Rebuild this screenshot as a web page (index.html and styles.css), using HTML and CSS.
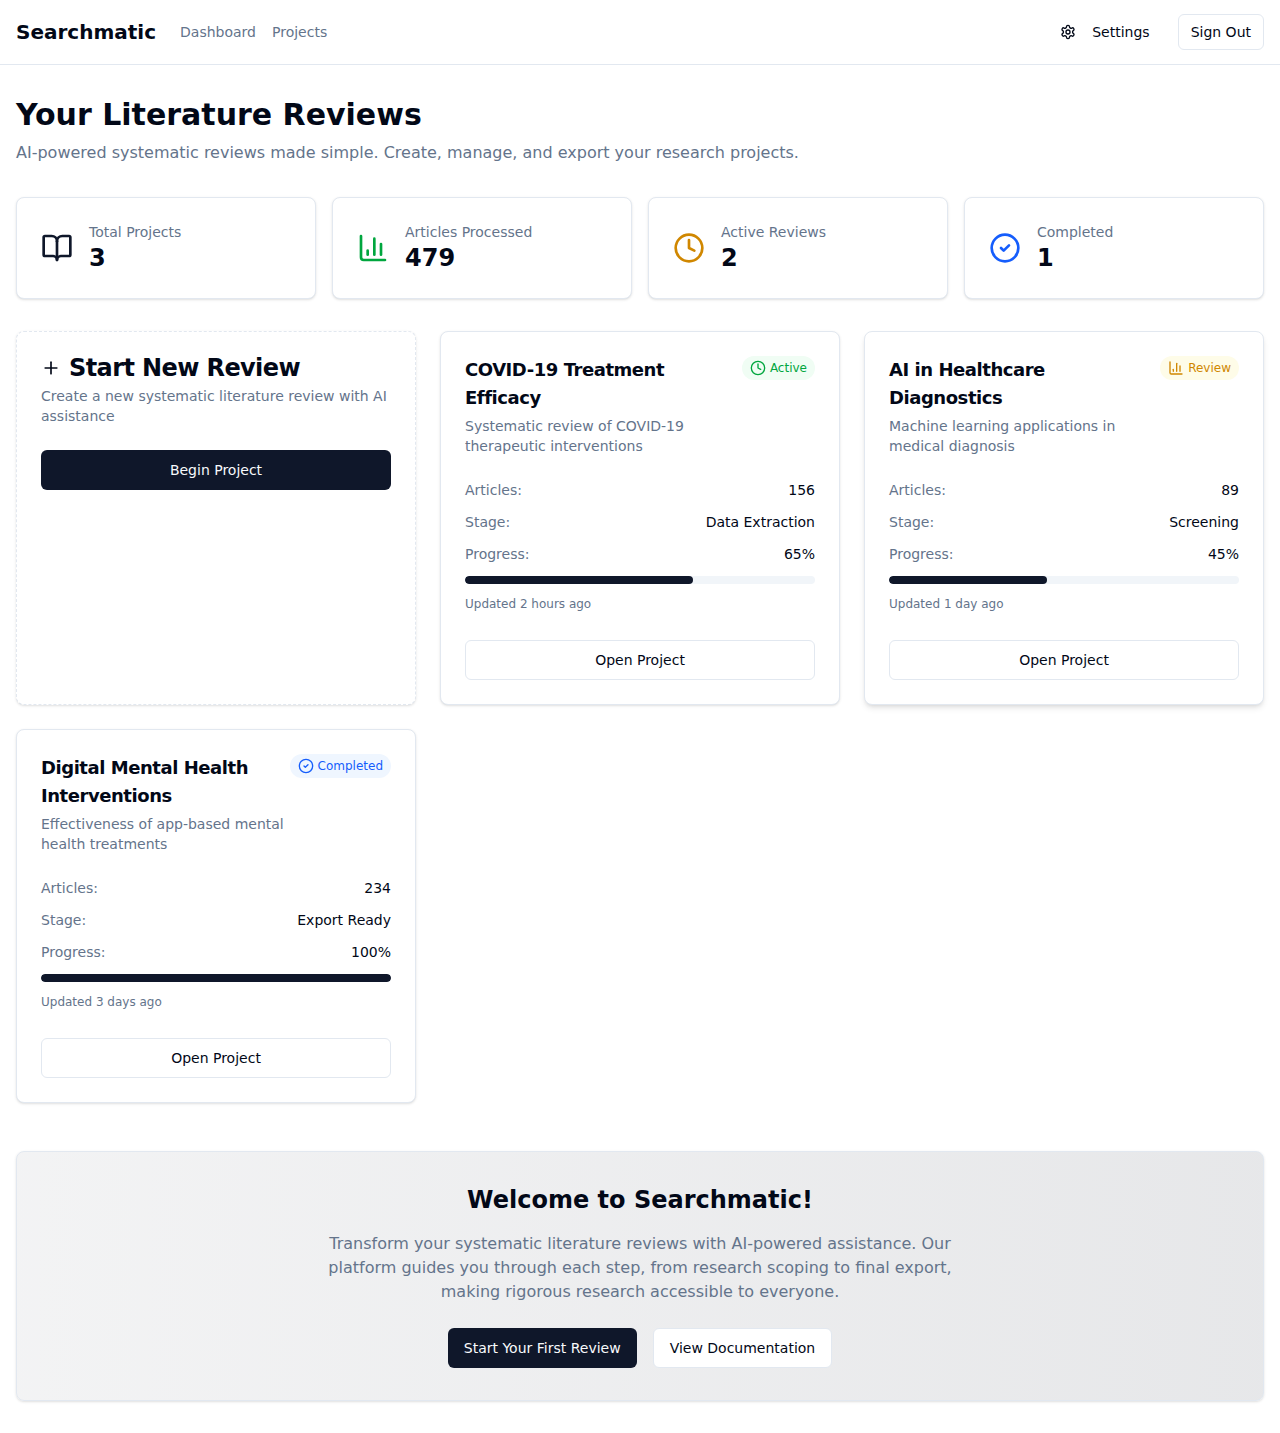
FILE: index.html
```html
<!DOCTYPE html>
<html lang="en">
<head>
<meta charset="utf-8">
<title>Searchmatic</title>
<link rel="stylesheet" href="styles.css">
</head>
<body>
<svg class="sprite" aria-hidden="true">
  <symbol id="settings" viewBox="0 0 24 24"><path d="M12.22 2h-.44a2 2 0 0 0-2 2v.18a2 2 0 0 1-1 1.73l-.43.25a2 2 0 0 1-2 0l-.15-.08a2 2 0 0 0-2.73.73l-.22.38a2 2 0 0 0 .73 2.73l.15.1a2 2 0 0 1 1 1.72v.51a2 2 0 0 1-1 1.74l-.15.09a2 2 0 0 0-.73 2.73l.22.38a2 2 0 0 0 2.73.73l.15-.08a2 2 0 0 1 2 0l.43.25a2 2 0 0 1 1 1.73V20a2 2 0 0 0 2 2h.44a2 2 0 0 0 2-2v-.18a2 2 0 0 1 1-1.73l.43-.25a2 2 0 0 1 2 0l.15.08a2 2 0 0 0 2.73-.73l.22-.39a2 2 0 0 0-.73-2.73l-.15-.08a2 2 0 0 1-1-1.74v-.5a2 2 0 0 1 1-1.74l.15-.09a2 2 0 0 0 .73-2.73l-.22-.38a2 2 0 0 0-2.73-.73l-.15.08a2 2 0 0 1-2 0l-.43-.25a2 2 0 0 1-1-1.73V4a2 2 0 0 0-2-2z"/><circle cx="12" cy="12" r="3"/></symbol>
  <symbol id="book" viewBox="0 0 24 24"><path d="M12 7v14"/><path d="M3 18a1 1 0 0 1-1-1V4a1 1 0 0 1 1-1h5a4 4 0 0 1 4 4 4 4 0 0 1 4-4h5a1 1 0 0 1 1 1v13a1 1 0 0 1-1 1h-6a3 3 0 0 0-3 3 3 3 0 0 0-3-3z"/></symbol>
  <symbol id="chart" viewBox="0 0 24 24"><path d="M3 3v16a2 2 0 0 0 2 2h16"/><path d="M18 17V9"/><path d="M13 17V5"/><path d="M8 17v-3"/></symbol>
  <symbol id="clock" viewBox="0 0 24 24"><circle cx="12" cy="12" r="10"/><path d="M12 6v6l4 2"/></symbol>
  <symbol id="check" viewBox="0 0 24 24"><circle cx="12" cy="12" r="10"/><path d="m9 12 2 2 4-4"/></symbol>
  <symbol id="plus" viewBox="0 0 24 24"><path d="M5 12h14"/><path d="M12 5v14"/></symbol>
</svg>

<header class="topbar">
  <div class="topbar-left">
    <div class="brand">Searchmatic</div>
    <nav class="nav"><a>Dashboard</a><a>Projects</a></nav>
  </div>
  <div class="topbar-right">
    <button class="btn btn-sm btn-ghost"><svg class="icon icon-sm"><use href="#settings"/></svg>Settings</button>
    <button class="btn btn-sm btn-outline">Sign Out</button>
  </div>
</header>

<main class="main">
  <section class="intro">
    <h1>Your Literature Reviews</h1>
    <p>AI-powered systematic reviews made simple. Create, manage, and export your research projects.</p>
  </section>

  <section class="stats">
    <div class="card stat"><svg class="icon icon-lg primary"><use href="#book"/></svg><div><p class="stat-label">Total Projects</p><p class="stat-value">3</p></div></div>
    <div class="card stat"><svg class="icon icon-lg green"><use href="#chart"/></svg><div><p class="stat-label">Articles Processed</p><p class="stat-value">479</p></div></div>
    <div class="card stat"><svg class="icon icon-lg yellow"><use href="#clock"/></svg><div><p class="stat-label">Active Reviews</p><p class="stat-value">2</p></div></div>
    <div class="card stat"><svg class="icon icon-lg blue"><use href="#check"/></svg><div><p class="stat-label">Completed</p><p class="stat-value">1</p></div></div>
  </section>

  <section class="projects">
    <article class="card project card-new">
      <h3 class="new-title"><svg class="icon icon-md"><use href="#plus"/></svg>Start New Review</h3>
      <p class="desc new-desc">Create a new systematic literature review with AI assistance</p>
      <button class="btn btn-primary btn-block">Begin Project</button>
    </article>

    <article class="card project">
      <div class="project-head">
        <div><h3 class="project-title">COVID-19 Treatment Efficacy</h3><p class="desc">Systematic review of COVID-19 therapeutic interventions</p></div>
        <span class="badge badge-active"><svg class="icon icon-sm"><use href="#clock"/></svg>Active</span>
      </div>
      <div class="details">
        <div class="row"><span>Articles:</span><b>156</b></div>
        <div class="row"><span>Stage:</span><b>Data Extraction</b></div>
        <div class="row"><span>Progress:</span><b>65%</b></div>
        <div class="track"><div class="fill" style="width:65%"></div></div>
        <p class="updated">Updated 2 hours ago</p>
      </div>
      <button class="btn btn-outline btn-block">Open Project</button>
    </article>

    <article class="card project card-raised">
      <div class="project-head">
        <div><h3 class="project-title">AI in Healthcare Diagnostics</h3><p class="desc">Machine learning applications in medical diagnosis</p></div>
        <span class="badge badge-review"><svg class="icon icon-sm"><use href="#chart"/></svg>Review</span>
      </div>
      <div class="details">
        <div class="row"><span>Articles:</span><b>89</b></div>
        <div class="row"><span>Stage:</span><b>Screening</b></div>
        <div class="row"><span>Progress:</span><b>45%</b></div>
        <div class="track"><div class="fill" style="width:45%"></div></div>
        <p class="updated">Updated 1 day ago</p>
      </div>
      <button class="btn btn-outline btn-block">Open Project</button>
    </article>

    <article class="card project">
      <div class="project-head">
        <div><h3 class="project-title">Digital Mental Health Interventions</h3><p class="desc">Effectiveness of app-based mental health treatments</p></div>
        <span class="badge badge-completed"><svg class="icon icon-sm"><use href="#check"/></svg>Completed</span>
      </div>
      <div class="details">
        <div class="row"><span>Articles:</span><b>234</b></div>
        <div class="row"><span>Stage:</span><b>Export Ready</b></div>
        <div class="row"><span>Progress:</span><b>100%</b></div>
        <div class="track"><div class="fill" style="width:100%"></div></div>
        <p class="updated">Updated 3 days ago</p>
      </div>
      <button class="btn btn-outline btn-block">Open Project</button>
    </article>
  </section>

  <section class="card welcome">
    <h2>Welcome to Searchmatic!</h2>
    <p>Transform your systematic literature reviews with AI-powered assistance. Our platform guides you through each step, from research scoping to final export, making rigorous research accessible to everyone.</p>
    <div class="actions">
      <button class="btn btn-primary">Start Your First Review</button>
      <button class="btn btn-outline">View Documentation</button>
    </div>
  </section>
</main>
</body>
</html>
```
FILE: styles.css
```css
:root {
  --fg: #020817;
  --muted: #64748b;
  --border: #e2e8f0;
  --primary: #0f172a;
}
* { box-sizing: border-box; margin: 0; padding: 0; }
body {
  background: #fff;
  color: var(--fg);
  font-family: "DejaVu Sans", sans-serif;
  font-size: 16px;
  line-height: 24px;
}
.sprite { display: none; }
.icon {
  flex-shrink: 0;
  fill: none;
  stroke: currentColor;
  stroke-width: 2;
  stroke-linecap: round;
  stroke-linejoin: round;
}
.icon-sm { width: 16px; height: 16px; }
.icon-md { width: 20px; height: 20px; }
.icon-lg { width: 32px; height: 32px; }
.primary { color: var(--primary); }
.green { color: #00a63e; }
.yellow { color: #d08700; }
.blue { color: #155dfc; }

.topbar {
  display: flex;
  align-items: center;
  justify-content: space-between;
  height: 65px;
  padding: 0 16px;
  border-bottom: 1px solid var(--border);
}
.topbar-left { display: flex; align-items: center; gap: 24px; }
.topbar-right { display: flex; align-items: center; gap: 16px; }
.brand { font-size: 20px; line-height: 28px; font-weight: 700; }
.nav { display: flex; gap: 16px; font-size: 14px; line-height: 20px; color: var(--muted); }

.btn {
  display: inline-flex;
  align-items: center;
  justify-content: center;
  height: 40px;
  padding: 0 16px;
  border: 0;
  border-radius: 6px;
  background: transparent;
  color: var(--fg);
  font: 500 14px/20px "DejaVu Sans", sans-serif;
  white-space: nowrap;
}
.btn-sm { height: 36px; padding: 0 12px; }
.btn-ghost { gap: 16px; }
.btn-outline { border: 1px solid var(--border); background: #fff; }
.btn-primary { background: var(--primary); color: #f8fafc; }
.btn-block { width: 100%; }

.main { padding: 32px 16px; }
.intro { margin-bottom: 32px; }
.intro h1 { margin-bottom: 8px; font-size: 30px; line-height: 36px; font-weight: 700; }
.intro p { color: var(--muted); }

.card {
  border: 1px solid var(--border);
  border-radius: 8px;
  background: #fff;
  box-shadow: 0 1px 3px 0 rgb(0 0 0 / .1), 0 1px 2px -1px rgb(0 0 0 / .1);
}
.stats { display: grid; grid-template-columns: repeat(4, 1fr); gap: 16px; margin-bottom: 32px; }
.stat { display: flex; align-items: center; gap: 16px; padding: 24px; }
.stat-label { font-size: 14px; line-height: 20px; color: var(--muted); }
.stat-value { font-size: 24px; line-height: 32px; font-weight: 700; }

.projects { display: grid; grid-template-columns: repeat(3, 1fr); gap: 24px; }
.project { padding: 24px; }
.card-new { border-style: dashed; }
.card-raised { box-shadow: 0 4px 6px -1px rgb(0 0 0 / .1), 0 2px 4px -2px rgb(0 0 0 / .1); }
.new-title {
  display: flex;
  align-items: center;
  gap: 8px;
  font-size: 24px;
  line-height: 24px;
  font-weight: 600;
  letter-spacing: -0.025em;
}
.desc { font-size: 14px; line-height: 20px; color: var(--muted); }
.new-desc { margin: 6px 0 24px; }
.project-head { display: flex; align-items: flex-start; justify-content: space-between; }
.project-title {
  margin-bottom: 4px;
  font-size: 18px;
  line-height: 28px;
  font-weight: 600;
  letter-spacing: -0.025em;
}
.badge {
  display: flex;
  flex-shrink: 0;
  align-items: center;
  gap: 4px;
  padding: 4px 8px;
  border-radius: 12px;
  font-size: 12px;
  line-height: 16px;
}
.badge-active { background: #f0fdf4; color: #00a63e; }
.badge-review { background: #fefce8; color: #d08700; }
.badge-completed { background: #eff6ff; color: #155dfc; }
.details { display: flex; flex-direction: column; gap: 12px; margin: 24px 0 28px; }
.row { display: flex; justify-content: space-between; font-size: 14px; line-height: 20px; }
.row span { color: var(--muted); }
.row b { font-weight: 500; }
.track { height: 8px; border-radius: 4px; background: #f1f5f9; overflow: hidden; }
.fill { height: 8px; border-radius: 4px; background: var(--primary); }
.updated { font-size: 12px; line-height: 16px; color: var(--muted); }

.welcome {
  margin-top: 48px;
  padding: 32px;
  background: linear-gradient(to right, rgb(15 23 42 / .05), rgb(15 23 42 / .1));
  text-align: center;
}
.welcome h2 { margin-bottom: 16px; font-size: 24px; line-height: 32px; font-weight: 700; }
.welcome p { max-width: 672px; margin: 0 auto 24px; color: var(--muted); }
.actions { display: flex; justify-content: center; gap: 16px; }
```
